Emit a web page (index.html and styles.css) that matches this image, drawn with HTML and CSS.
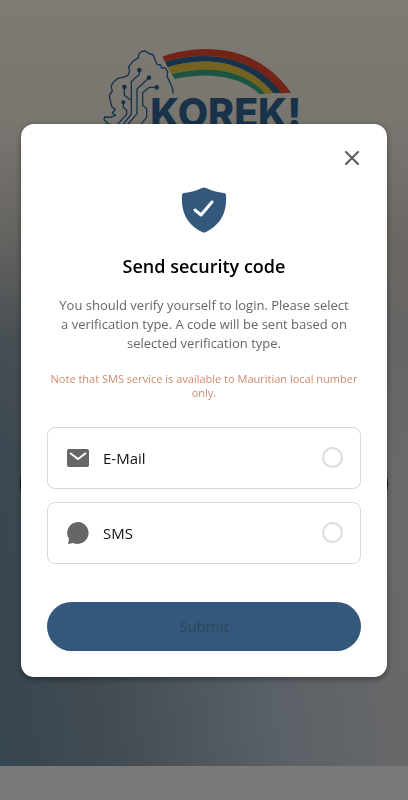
FILE: index.html
```html
<!DOCTYPE html>
<html lang="en">
<head>
  <meta charset="UTF-8">
  <meta name="viewport" content="width=device-width, initial-scale=1.0">
  <title>Send security code</title>
  <link rel="stylesheet" href="styles.css">
</head>
<body>
  <div class="page">
    <svg class="logo" viewBox="0 0 690 300" role="img" aria-label="KOREK!">
      <!-- rainbow -->
      <path fill="#e8482f" d="M220 65C350 20 510 35 606 173L575 175C490 60 350 45 228 80Z"/>
      <path fill="#2f6492" d="M228 80C350 45 490 60 577 174L552 175C470 75 350 62 236 97Z"/>
      <path fill="#e6c440" d="M236 97C350 62 470 75 553 174L527 177C460 100 350 92 248 118Z"/>
      <path fill="#37a883" d="M248 118C350 92 460 100 529 176L512 177C450 120 350 110 257 132Z"/>
      <!-- island outline and circuit -->
      <g fill="none" stroke="#2c6594" stroke-width="4" stroke-linejoin="round">
        <path d="M253 176L250 158L242 140L234 124L236 110L228 98L218 99L215 90L204 88L199 77L193 60L179 55L169 48L159 49L150 56L148 68L133 78L121 93L118 96L122 107L117 121L102 127L86 130L71 144L66 155L70 168L61 181L65 202L69 216L79 223L70 234L80 241L62 247L47 246L45 254L53 262L68 272"/>
        <path d="M151 105V118L127 140V237L98 274M180 128L144 162V236L110 276M106 156V181L124 194M103 202V217L113 226V238L82 272M203 157H181L161 173V211L173 221V247L153 272"/>
      </g>
      <g fill="#2c6594">
        <circle cx="151" cy="105" r="7"/>
        <circle cx="180" cy="128" r="7"/>
        <circle cx="106" cy="156" r="7"/>
        <circle cx="203" cy="157" r="7"/>
        <circle cx="103" cy="202" r="6"/>
      </g>
      <text class="logo-text" x="184" y="277">KOREK!</text>
    </svg>
    <div class="login-bar"></div>
  </div>

  <div class="overlay">
    <form class="dialog" role="dialog" aria-labelledby="dialogTitle">
      <button type="button" class="close-btn" aria-label="Close">
        <svg viewBox="0 0 14 14"><path d="M1 1L13 13M13 1L1 13"/></svg>
      </button>

      <svg class="shield" viewBox="0 0 46 46" aria-hidden="true">
        <path fill="#34587c" d="M21 1Q23 0 25 1Q33 5 43 6Q45 6 45 8C46 24 41 37 25 45Q23 46 21 45C5 37 0 24 1 8Q1 6 3 6Q13 5 21 1Z"/>
        <path class="check" d="M14 23L20 28L31 15"/>
      </svg>

      <h1 id="dialogTitle">Send security code</h1>
      <p class="description">You should verify yourself to login. Please select a verification type. A code will be sent based on selected verification type.</p>
      <p class="note">Note that SMS service is available to Mauritian local number only.</p>

      <div class="options">
        <label class="option">
          <svg viewBox="0 0 22 22" aria-hidden="true">
            <rect width="22" height="18" y="2" rx="2" fill="#666"/>
            <path d="M3 6L11 12L19 6" fill="none" stroke="#fff" stroke-width="2"/>
          </svg>
          <span>E-Mail</span>
          <input type="radio" name="type" value="email">
        </label>
        <label class="option">
          <svg viewBox="0 0 22 22" aria-hidden="true">
            <path fill="#666" d="M11 0A11 11 0 1 1 6 21L1 22L2 17A11 11 0 0 1 11 0Z"/>
          </svg>
          <span>SMS</span>
          <input type="radio" name="type" value="sms">
        </label>
      </div>

      <button type="submit" class="submit-btn" disabled>Submit</button>
    </form>
  </div>
</body>
</html>
```

FILE: styles.css
```css
* {
  margin: 0;
  padding: 0;
  box-sizing: border-box;
}

body {
  font-family: "Open Sans", "Noto Sans", sans-serif;
  background: #f2f2f2;
  min-height: 100vh;
  padding-bottom: 34px;
}

.page {
  min-height: calc(100vh - 34px);
  padding: 35px 20px 0;
  background:
    linear-gradient(180deg, #fff6e8 0%, #f0e9de 18%, rgba(215, 208, 198, 0.85) 31%, rgba(190, 186, 180, 0.3) 44%, rgba(190, 190, 190, 0) 60%),
    linear-gradient(82deg, #6c8ca2 0%, #8495a2 20%, #b4c2ce 55%, #d2d2d4 82%, #dcd4ce 100%);
}

.logo {
  display: block;
  width: 230px;
  height: 100px;
  margin: 0 auto;
}

.logo-text {
  font-family: Inter, sans-serif;
  font-size: 118px;
  font-weight: 800;
  fill: #2f6492;
}

.login-bar {
  height: 60px;
  margin-top: 319px;
  border-radius: 30px;
  background: #10202e;
}

.overlay {
  position: fixed;
  inset: 0;
  display: flex;
  align-items: center;
  justify-content: center;
  padding: 0 21px;
  background: rgba(0, 0, 0, 0.5);
}

.dialog {
  display: flex;
  flex-direction: column;
  width: 100%;
  max-width: 480px;
  padding: 25px 26px 26px;
  background: #fff;
  border-radius: 13px;
  box-shadow: 0 2px 6px rgba(0, 0, 0, 0.4);
  text-align: center;
}

.close-btn {
  align-self: flex-end;
  width: 18px;
  height: 18px;
  padding: 2px;
  border: none;
  background: none;
  cursor: pointer;
}

.close-btn svg {
  display: block;
  fill: none;
  stroke: #5c5c5c;
  stroke-width: 2;
  stroke-linecap: round;
}

.shield {
  width: 46px;
  height: 46px;
  margin: 20px auto;
}

.check {
  fill: none;
  stroke: #fff;
  stroke-width: 3;
  stroke-linecap: round;
  stroke-linejoin: round;
}

h1 {
  font-size: 18px;
  font-weight: 600;
  line-height: 26px;
  color: #000;
}

.description {
  margin-top: 17px;
  padding: 0 10px;
  font-size: 13px;
  line-height: 19px;
  color: #666;
}

.note {
  margin-top: 19px;
  font-size: 11px;
  line-height: 14px;
  color: #cc8b6e;
}

.options {
  display: grid;
  gap: 13px;
  margin: 27px 0 38px;
}

.option {
  display: flex;
  align-items: center;
  gap: 14px;
  height: 62px;
  padding: 0 17px 0 19px;
  border: 1px solid #d9d9d9;
  border-radius: 8px;
  font-size: 15px;
  color: #111;
  cursor: pointer;
}

.option svg {
  width: 22px;
  height: 22px;
}

.option input {
  appearance: none;
  width: 21px;
  height: 21px;
  margin-left: auto;
  border: 2px solid #dcdcdc;
  border-radius: 50%;
}

.option input:checked {
  border: 6px solid #34587c;
}

.submit-btn {
  height: 49px;
  border: none;
  border-radius: 25px;
  background: #34587c;
  font-family: inherit;
  font-size: 15px;
  color: #2b4560;
}
```
